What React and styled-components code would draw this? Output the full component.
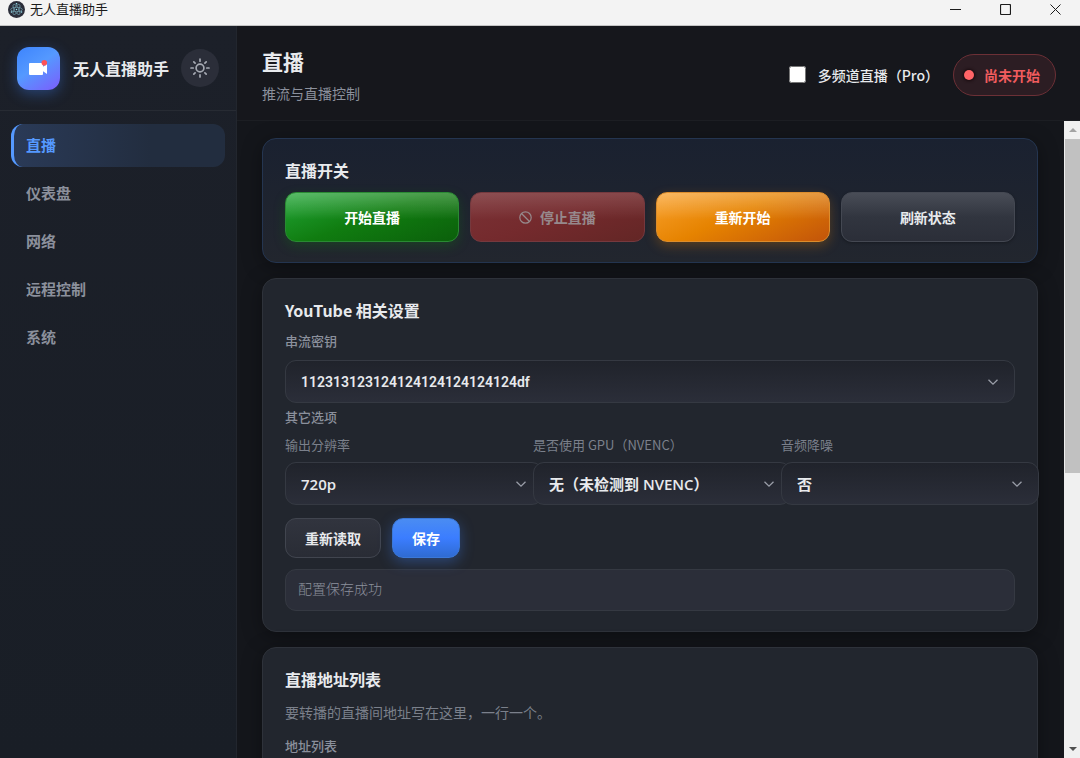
import React, { useState } from "react";
import styled, { createGlobalStyle, css } from "styled-components";

const NAV_ITEMS = ["直播", "仪表盘", "网络", "远程控制", "系统"];

const OPTIONS = [
  { id: "resolution", label: "输出分辨率", value: "720p" },
  { id: "gpu", label: "是否使用 GPU（NVENC）", value: "无（未检测到 NVENC）" },
  { id: "denoise", label: "音频降噪", value: "否" },
];

const AtomIcon = () => (
  <svg width="17" height="17" viewBox="0 0 34 34" fill="none">
    <circle cx="17" cy="17" r="17" fill="#2b2e3a" />
    <g stroke="#9feaf9" strokeWidth="1.5" opacity="0.6">
      <ellipse cx="17" cy="17" rx="11.5" ry="4.4" />
      <ellipse cx="17" cy="17" rx="11.5" ry="4.4" transform="rotate(60 17 17)" />
      <ellipse cx="17" cy="17" rx="11.5" ry="4.4" transform="rotate(120 17 17)" />
    </g>
    <circle cx="17" cy="17" r="1.5" fill="#9feaf9" />
    <circle cx="7" cy="22" r="1.6" fill="#9feaf9" />
    <circle cx="27" cy="22" r="1.6" fill="#9feaf9" />
    <circle cx="17" cy="5.5" r="1.6" fill="#9feaf9" />
  </svg>
);

const CameraIcon = () => (
  <svg width="43" height="43" viewBox="0 0 43 43">
    <rect x="12" y="16" width="14" height="12" rx="1" fill="#fff" />
    <path d="M25 20.5 L30 17 V27 L25 23.5 Z" fill="#fff" />
    <circle cx="27.3" cy="15.8" r="2.8" fill="#ff5257" />
  </svg>
);

const SunIcon = () => (
  <svg
    width="20"
    height="20"
    viewBox="0 0 20 20"
    fill="none"
    stroke="currentColor"
    strokeWidth="1.7"
    strokeLinecap="round"
  >
    <circle cx="10" cy="10" r="3.9" />
    <path d="M10 1v2.2M10 16.8v2.2M1 10h2.2M16.8 10h2.2M3.8 3.8l1.3 1.3M14.9 14.9l1.3 1.3M3.8 16.2l1.3-1.3M14.9 5.1l1.3-1.3" />
  </svg>
);

const BanIcon = () => (
  <svg width="13" height="13" viewBox="0 0 13 13" fill="none" stroke="currentColor" strokeWidth="1.2">
    <circle cx="6.5" cy="6.5" r="5.7" />
    <path d="M2.5 2.5l8 8" />
  </svg>
);

const ChevronIcon = () => (
  <svg width="12" height="12" viewBox="0 0 12 12" fill="none" stroke="currentColor" strokeWidth="1.3">
    <path d="M1.5 3.8L6 8.2l4.5-4.4" />
  </svg>
);

const SelectBox = ({ id, value, $key }) => (
  <SelectWrap>
    <Select id={id} defaultValue={value} $key={$key}>
      <option>{value}</option>
    </Select>
    <ChevronIcon />
  </SelectWrap>
);

const App = () => {
  const [active, setActive] = useState("直播");

  return (
    <Window>
      <GlobalStyle />
      <TitleBar>
        <AtomIcon />
        <WindowName>无人直播助手</WindowName>
        <WindowButton aria-label="最小化">
          <svg width="11" height="11" viewBox="0 0 11 11" stroke="currentColor">
            <path d="M0 5.5h11" />
          </svg>
        </WindowButton>
        <WindowButton aria-label="最大化">
          <svg width="11" height="11" viewBox="0 0 11 11" fill="none" stroke="currentColor">
            <rect x=".5" y=".5" width="10" height="10" rx="1" strokeWidth="1.2" />
          </svg>
        </WindowButton>
        <WindowButton aria-label="关闭">
          <svg width="11" height="11" viewBox="0 0 11 11" stroke="currentColor">
            <path d="M.5.5l10 10M10.5.5l-10 10" />
          </svg>
        </WindowButton>
      </TitleBar>

      <Body>
        <Sidebar>
          <Brand>
            <Logo>
              <CameraIcon />
            </Logo>
            <BrandName>无人直播助手</BrandName>
            <ThemeButton aria-label="切换主题">
              <SunIcon />
            </ThemeButton>
          </Brand>
          <Nav>
            {NAV_ITEMS.map((item) => (
              <NavItem key={item} $active={item === active} onClick={() => setActive(item)}>
                {item}
              </NavItem>
            ))}
          </Nav>
        </Sidebar>

        <Main>
          <Header>
            <div>
              <Title>直播</Title>
              <Subtitle>推流与直播控制</Subtitle>
            </div>
            <HeaderTools>
              <CheckLabel>
                <input type="checkbox" />
                多频道直播（Pro）
              </CheckLabel>
              <StatusPill>
                <StatusDot />
                尚未开始
              </StatusPill>
            </HeaderTools>
          </Header>

          <ScrollArea>
            <Content>
              <Card $accent>
                <CardTitle>直播开关</CardTitle>
                <ActionGrid>
                  <ActionButton $tone="green">开始直播</ActionButton>
                  <ActionButton $tone="red" disabled>
                    <BanIcon />
                    停止直播
                  </ActionButton>
                  <ActionButton $tone="orange">重新开始</ActionButton>
                  <ActionButton $tone="gray">刷新状态</ActionButton>
                </ActionGrid>
              </Card>

              <Card>
                <CardTitle>YouTube 相关设置</CardTitle>
                <Label htmlFor="streamKey">串流密钥</Label>
                <SelectBox id="streamKey" value="112313123124124124124124124df" $key />
                <Legend>其它选项</Legend>
                <OptionGrid>
                  {OPTIONS.map((option) => (
                    <Option key={option.id}>
                      <OptionLabel htmlFor={option.id}>{option.label}</OptionLabel>
                      <SelectBox id={option.id} value={option.value} />
                    </Option>
                  ))}
                </OptionGrid>
                <ButtonRow>
                  <SmallButton>重新读取</SmallButton>
                  <SmallButton $primary>保存</SmallButton>
                </ButtonRow>
                <Message>配置保存成功</Message>
              </Card>

              <Card>
                <CardTitle>直播地址列表</CardTitle>
                <Hint>要转播的直播间地址写在这里，一行一个。</Hint>
                <Label htmlFor="urls">地址列表</Label>
                <TextArea id="urls" />
              </Card>
            </Content>
            <ScrollBar>
              <Arrow $up />
              <Thumb />
              <Track />
              <Arrow />
            </ScrollBar>
          </ScrollArea>
        </Main>
      </Body>
    </Window>
  );
};

export default App;

const GlobalStyle = createGlobalStyle`
  * {
    box-sizing: border-box;
  }

  body {
    margin: 0;
    background: #14161b;
    overflow: hidden;
  }

  body, button, input, select, textarea {
    font-family: "Noto Sans CJK SC", "Open Sans", sans-serif;
  }

  h1, h2, p {
    margin: 0;
  }

  svg {
    flex: none;
    display: block;
  }
`;

const Window = styled.div`
  display: flex;
  flex-direction: column;
  height: 100vh;
  color: #e8eaed;
`;

const TitleBar = styled.div`
  display: flex;
  align-items: center;
  flex: none;
  height: 26px;
  padding: 0 0 7px 8px;
  background: #f3f3f3;
  border-bottom: 1px solid #c4c4c4;
  color: #1b1b1b;
`;

const WindowName = styled.div`
  flex: 1;
  margin-left: 5px;
  font-size: 13px;
  line-height: 18px;
`;

const WindowButton = styled.button`
  display: flex;
  align-items: center;
  justify-content: center;
  width: 50px;
  height: 18px;
  padding: 0;
  border: 0;
  background: none;
  color: #1b1b1b;
`;

const Body = styled.div`
  display: flex;
  flex: 1;
  min-height: 0;
`;

const Sidebar = styled.aside`
  flex: none;
  width: 237px;
  background: linear-gradient(180deg, #1c2029, #191e26);
  border-right: 1px solid #22262e;
`;

const Brand = styled.div`
  display: flex;
  align-items: center;
  height: 85px;
  padding: 0 17px;
  border-bottom: 1px solid #272b33;
`;

const Logo = styled.div`
  width: 43px;
  height: 43px;
  border-radius: 12px;
  background: linear-gradient(145deg, #3d84fd 0%, #5599ff 45%, #7c5cfc 100%);
  box-shadow: 0 4px 14px rgba(64, 132, 255, 0.35);
`;

const BrandName = styled.div`
  flex: 1;
  margin-left: 13px;
  font-size: 16px;
  font-weight: 700;
  white-space: nowrap;
`;

const ThemeButton = styled.button`
  display: flex;
  align-items: center;
  justify-content: center;
  width: 38px;
  height: 38px;
  padding: 0;
  border: 0;
  border-radius: 50%;
  background: #2b2e39;
  color: #a5a9b2;
`;

const Nav = styled.nav`
  display: flex;
  flex-direction: column;
  gap: 5px;
  padding: 13px 11px;
`;

const NavItem = styled.button`
  height: 43px;
  padding: 0 12px 2px;
  border: 0;
  border-left: 3px solid transparent;
  border-radius: 12px;
  background: none;
  color: #8b909c;
  font-size: 15px;
  font-weight: 600;
  text-align: left;

  ${({ $active }) =>
    $active &&
    css`
      border-left-color: #5599ff;
      background: linear-gradient(90deg, #2a3a57, #222d3f 65%);
      color: #5599ff;
    `}
`;

const Main = styled.main`
  display: flex;
  flex-direction: column;
  flex: 1;
  min-width: 0;
  background: #14161b;
`;

const Header = styled.header`
  display: flex;
  align-items: center;
  justify-content: space-between;
  flex: none;
  height: 95px;
  padding: 3px 24px 0 25px;
  background: #16171c;
  border-bottom: 1px solid #1c1e23;
`;

const Title = styled.h1`
  font-size: 21px;
  font-weight: 700;
  line-height: 32px;
`;

const Subtitle = styled.p`
  margin-top: 4px;
  color: #8b909c;
  font-size: 14px;
  line-height: 24px;
`;

const HeaderTools = styled.div`
  display: flex;
  align-items: center;
  gap: 14px;
`;

const CheckLabel = styled.label`
  display: flex;
  align-items: center;
  gap: 12px;
  font-size: 14px;
  font-weight: 500;

  input {
    width: 17px;
    height: 17px;
    margin: 0;
  }
`;

const StatusPill = styled.div`
  display: flex;
  align-items: center;
  gap: 10px;
  height: 42px;
  padding: 0 15px 0 10px;
  border: 1px solid #6c3036;
  border-radius: 21px;
  background: #2c1d23;
  color: #f05c5e;
  font-size: 14px;
  font-weight: 600;
`;

const StatusDot = styled.span`
  width: 10px;
  height: 10px;
  border-radius: 50%;
  background: #ff6467;
  box-shadow: 0 0 3px 1px #17090d;
`;

const ScrollArea = styled.div`
  display: flex;
  flex: 1;
  min-height: 0;
`;

const Content = styled.div`
  display: flex;
  flex-direction: column;
  flex: 1;
  gap: 15px;
  min-width: 0;
  padding: 17px 26px 0 25px;
  overflow: hidden;
`;

const Card = styled.section`
  flex: none;
  padding: 19px 22px 20px;
  border: 1px solid ${({ $accent }) => ($accent ? "#243550" : "#2e323a")};
  border-radius: 14px;
  background: ${({ $accent }) =>
    $accent ? "linear-gradient(180deg, #1a2130, #22262e)" : "#22262e"};
  box-shadow: 0 4px 20px rgba(0, 0, 0, 0.35);
`;

const CardTitle = styled.h2`
  padding-bottom: 2px;
  font-size: 16px;
  font-weight: 700;
  line-height: 24px;
`;

const ActionGrid = styled.div`
  display: grid;
  grid-template-columns: repeat(4, 1fr);
  gap: 11px;
  margin-top: 8px;
`;

const tones = {
  green: css`
    border-color: #2a8a33;
    background: linear-gradient(180deg, rgba(255, 255, 255, 0.25), transparent 55%),
      linear-gradient(160deg, #22a637 0%, #107c10 50%, #0b5f0b 100%);
    box-shadow: 0 4px 12px rgba(16, 124, 16, 0.3);
  `,
  red: css`
    border-color: #75393e;
    background: linear-gradient(180deg, rgba(255, 255, 255, 0.14), transparent 55%),
      linear-gradient(160deg, #7b3236 0%, #742a2d 50%, #632625 100%);
    color: #96898c;
  `,
  orange: css`
    border-color: #dc8d2c;
    background: linear-gradient(180deg, rgba(255, 255, 255, 0.25), transparent 55%),
      linear-gradient(155deg, #f9a12d 0%, #e68300 45%, #c2540a 100%);
    box-shadow: 0 4px 12px rgba(230, 130, 0, 0.28);
  `,
  gray: css`
    border-color: #444852;
    background: linear-gradient(180deg, #494d57, #31353f 50%, #2b2e38);
    box-shadow: 0 1px 3px rgba(0, 0, 0, 0.3);
    color: #e8eaed;
  `,
};

const ActionButton = styled.button`
  display: flex;
  align-items: center;
  justify-content: center;
  gap: 8px;
  height: 50px;
  border: 1px solid;
  border-radius: 11px;
  color: #fff;
  font-size: 14px;
  font-weight: 700;
  ${({ $tone }) => tones[$tone]}
`;

const Label = styled.label`
  display: block;
  margin: 6px 0 8px;
  color: #8b909c;
  font-size: 13px;
  font-weight: 500;
  line-height: 22px;
`;

const Legend = styled.div`
  margin-top: 3px;
  color: #8b909c;
  font-size: 13px;
  font-weight: 500;
  line-height: 22px;
`;

const SelectWrap = styled.div`
  display: grid;
  align-items: center;
  color: #9a9ea8;

  & > * {
    grid-area: 1 / 1;
  }

  svg {
    justify-self: end;
    margin-right: 16px;
    pointer-events: none;
  }
`;

const Select = styled.select`
  width: 100%;
  height: 43px;
  padding: 0 40px 0 15px;
  appearance: none;
  border: 1px solid #353942;
  border-radius: 11px;
  background: linear-gradient(180deg, #20232b, #2b2e39);
  color: #e8eaed;
  font-family: "Open Sans", "Noto Sans CJK SC", sans-serif;
  font-size: 15px;
  font-weight: 600;

  ${({ $key }) =>
    $key &&
    css`
      font-family: Roboto, "Noto Sans CJK SC", sans-serif;
      font-size: 14px;
    `}
`;

const OptionGrid = styled.div`
  display: grid;
  grid-template-columns: repeat(3, 1fr);
  gap: 14px;
  margin-top: 6px;
`;

/* each field runs past its column, over the start of the next one */
const Option = styled.div`
  margin-right: -24px;
`;

const OptionLabel = styled.label`
  display: block;
  margin-bottom: 6px;
  color: #7b808b;
  font-size: 13px;
  line-height: 22px;
`;

const ButtonRow = styled.div`
  display: flex;
  gap: 11px;
  margin: 13px 0 11px;
`;

const SmallButton = styled.button`
  height: 40px;
  padding: 0 19px;
  border: 1px solid #41454f;
  border-radius: 11px;
  background: linear-gradient(180deg, #31343e, #292c35);
  color: #e8eaed;
  font-size: 14px;
  font-weight: 600;

  ${({ $primary }) =>
    $primary &&
    css`
      border-color: #3b78d8;
      background: linear-gradient(180deg, #4a8cf2, #3b7dff 50%, #2f6bd2);
      box-shadow: 0 4px 14px rgba(64, 132, 255, 0.35);
      color: #fff;
    `}
`;

const Message = styled.output`
  display: block;
  height: 42px;
  padding: 7px 12px;
  border: 1px solid #353942;
  border-radius: 11px;
  background: #2b2e39;
  color: #8b909c;
  font-size: 14px;
  font-weight: 300;
  line-height: 22px;
`;

const Hint = styled.p`
  margin: 8px 0 12px;
  color: #7b808b;
  font-size: 14px;
  line-height: 22px;
`;

const TextArea = styled.textarea`
  display: block;
  width: 100%;
  height: 160px;
  border: 1px solid #353942;
  border-radius: 11px;
  background: #20232b;
  color: #e8eaed;
`;

const ScrollBar = styled.div`
  display: flex;
  flex-direction: column;
  flex: none;
  width: 16px;
  padding-left: 1px;
  background: #f0f0f0;
`;

const Arrow = styled.span`
  display: flex;
  align-items: center;
  justify-content: center;
  height: 18px;

  &::before {
    content: "";
    border: 4px solid transparent;
    border-top-width: 0;
    border-bottom: 4px solid #a3a3a3;
    ${({ $up }) => !$up && "transform: rotate(180deg); border-bottom-color: #505050;"}
  }
`;

const Thumb = styled.div`
  flex: 5;
  background: #c1c1c1;
`;

const Track = styled.div`
  flex: 4;
`;
